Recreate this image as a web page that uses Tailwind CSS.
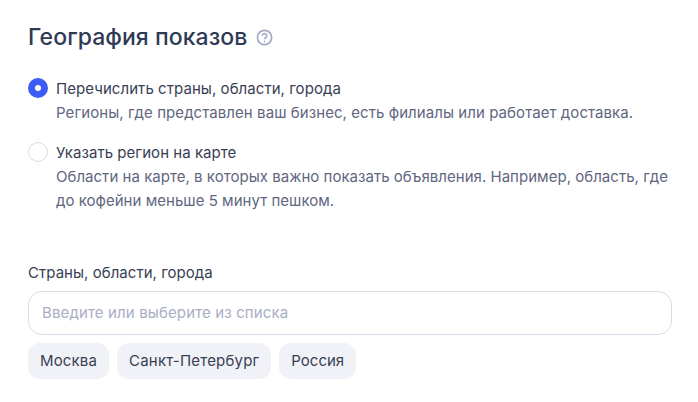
<!DOCTYPE html>
<html lang="ru">
<head>
    <meta charset="UTF-8">
    <title>География показов</title>
    <script src="https://cdn.jsdelivr.net/npm/@tailwindcss/browser@4"></script>
</head>
<body class="bg-white font-['Inter',sans-serif] text-[#383e54] w-[698px] h-[402px] overflow-hidden">
    <div class="pl-7 pr-[26px] pt-[23px]">
        <div class="flex items-center gap-[9px] h-7">
            <h1 class="text-[23px] leading-7 font-medium text-[#2f3a55] tracking-[0.06px]">География показов</h1>
            <svg class="w-[17px] h-[17px] text-[#a3a8c0]" viewBox="0 0 16 16" fill="none" stroke="currentColor" stroke-width="1.6">
                <circle cx="8" cy="8" r="6.7"/>
                <path d="M5.9 6.4a2.1 2.1 0 1 1 3.2 1.8c-.7.4-1.1.8-1.1 1.5"/>
                <circle cx="8" cy="11.6" r=".5" fill="currentColor" stroke-width=".6"/>
            </svg>
        </div>

        <div class="mt-[26px] flex gap-2">
            <span class="w-5 h-5 mt-[1px] rounded-full bg-[#3d5cf5] flex items-center justify-center shrink-0">
                <span class="w-1.5 h-1.5 rounded-full bg-white"></span>
            </span>
            <div class="text-[15px] leading-6">
                <div class="tracking-[0.06px]">Перечислить страны, области, города</div>
                <div class="text-[#5f6680] tracking-[0.07px]">Регионы, где представлен ваш бизнес, есть филиалы или работает доставка.</div>
            </div>
        </div>

        <div class="mt-4 flex gap-2">
            <span class="w-5 h-5 mt-[1px] rounded-full border border-[#d9dbe8] bg-white shrink-0"></span>
            <div class="text-[15px] leading-6">
                <div class="tracking-[0.04px]">Указать регион на карте</div>
                <div class="text-[#5f6680] tracking-[0.03px]">Области на карте, в которых важно показать объявления. Например, область, где<br>до кофейни меньше 5 минут пешком.</div>
            </div>
        </div>

        <div class="mt-[48px] text-[15px] leading-6 tracking-[0.04px]">Страны, области, города</div>
        <div class="mt-[6px] h-11 rounded-[14px] border border-[#d9dbe8] px-[13px] flex items-center text-[15px] text-[#a9aec4] tracking-[0.13px]">Введите или выберите из списка</div>
        <div class="mt-2 flex gap-2 text-[15px]">
            <span class="h-9 px-3 rounded-xl bg-[#f1f2f7] flex items-center tracking-[0.15px]">Москва</span>
            <span class="h-9 px-3 rounded-xl bg-[#f1f2f7] flex items-center tracking-[0.2px]">Санкт-Петербург</span>
            <span class="h-9 px-3 rounded-xl bg-[#f1f2f7] flex items-center">Россия</span>
        </div>
    </div>
</body>
</html>
